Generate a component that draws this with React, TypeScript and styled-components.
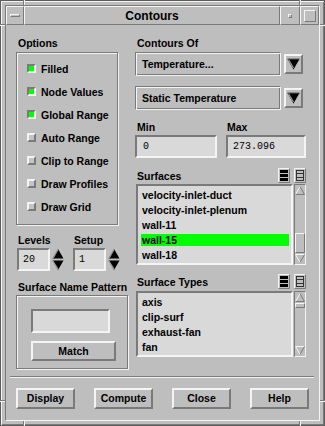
import React from 'react';
import styled, { createGlobalStyle, css } from 'styled-components';

const BG = '#bebebe';
const LIGHT = '#f4f4f4';
const DARK = '#7a7a7a';
const FIELD = '#d9d9d9';
const GREEN = '#00ff00';
const FONT = '"Liberation Sans", Arial, Helvetica, sans-serif';
const MONO = '"Liberation Mono", "Courier New", monospace';

const Global = createGlobalStyle`
  html, body { margin: 0; padding: 0; background: ${BG}; }
  body { font-family: ${FONT}; color: #000; }
  * { box-sizing: border-box; }
`;

const raised = (w: number) => css`
  border: ${w}px solid;
  border-color: ${LIGHT} ${DARK} ${DARK} ${LIGHT};
`;
const sunken = (w: number) => css`
  border: ${w}px solid;
  border-color: ${DARK} ${LIGHT} ${LIGHT} ${DARK};
`;

const Window = styled.div`
  position: relative;
  width: 325px;
  height: 426px;
  background: ${BG};
  border: 1px solid #5c5c5c;
  box-shadow: inset 1px 1px 0 ${LIGHT}, inset -1px -1px 0 ${DARK};
  padding: 4px;
`;

const Inner = styled.div`
  height: 100%;
  display: flex;
  flex-direction: column;
  ${sunken(1)}
`;

const Notch = styled.span<{ $x: number; $y: number; $vertical?: boolean; $len: number }>`
  position: absolute;
  left: ${(p) => p.$x - 1}px;
  top: ${(p) => p.$y - 1}px;
  width: ${(p) => (p.$vertical ? 2 : p.$len)}px;
  height: ${(p) => (p.$vertical ? p.$len : 2)}px;
  ${(p) =>
    p.$vertical
      ? css`border-left: 1px solid ${DARK}; border-right: 1px solid ${LIGHT};`
      : css`border-top: 1px solid ${DARK}; border-bottom: 1px solid ${LIGHT};`}
`;

const TitleBar = styled.div`
  display: flex;
  height: 19px;
`;

const TitleSeg = styled.div<{ $w?: number }>`
  ${raised(1)}
  ${(p) => (p.$w ? css`width: ${p.$w}px;` : css`flex: 1;`)}
  display: flex;
  align-items: center;
  justify-content: center;
  font: bold 12px/1 ${FONT};
`;

const MenuGlyph = styled.span`
  width: 10px;
  height: 3px;
  ${raised(1)}
`;

const MinGlyph = styled.span`
  width: 4px;
  height: 4px;
  ${raised(1)}
`;

const MaxGlyph = styled.span`
  width: 12px;
  height: 12px;
  ${raised(1)}
`;

const Main = styled.div`
  height: 351px;
  display: flex;
  padding: 12px 0 0 10px;
`;

const LeftCol = styled.div`
  width: 119px;
  display: flex;
  flex-direction: column;
`;

const RightCol = styled.div`
  width: 171px;
  display: flex;
  flex-direction: column;
`;

const Label = styled.div<{ $ml?: number; $mt?: number }>`
  font: bold 10.5px/12px ${FONT};
  height: 12px;
  white-space: nowrap;
  margin-left: ${(p) => p.$ml ?? 2}px;
  margin-top: ${(p) => p.$mt ?? 0}px;
`;

const GroupBox = styled.div<{ $w: number; $mt: number }>`
  width: ${(p) => p.$w}px;
  margin-top: ${(p) => p.$mt}px;
  border: 1px solid ${DARK};
  box-shadow: inset 1px 1px 0 ${LIGHT}, 1px 1px 0 ${LIGHT};
  display: flex;
  flex-direction: column;
`;

const OptionsBox = styled(GroupBox)`
  padding: 4px 0 6px 10px;
`;

const OptionRow = styled.div`
  height: 23px;
  display: flex;
  align-items: center;
  gap: 5px;
  font: bold 10.5px/12px ${FONT};
  white-space: nowrap;
`;

const Check = styled.span<{ $on: boolean }>`
  width: 9px;
  height: 9px;
  flex: none;
  ${(p) => (p.$on ? sunken(2) : raised(2))}
  background: ${(p) => (p.$on ? GREEN : '#c4c4c4')};
`;

const SpinRow = styled.div`
  display: flex;
  gap: 9px;
  margin: 9px 0 0 1px;
`;

const SpinGroup = styled.div`
  display: flex;
  flex-direction: column;
`;

const InputRow = styled.div`
  display: flex;
  align-items: center;
  margin-top: 2px;
  gap: 2px;
`;

const TextField = styled.div<{ $w: number; $h: number; $pl?: number }>`
  width: ${(p) => p.$w}px;
  height: ${(p) => p.$h}px;
  ${sunken(2)}
  background: ${FIELD};
  font: 10px/1 ${MONO};
  display: flex;
  align-items: center;
  padding-left: ${(p) => p.$pl ?? 4}px;
`;

const PatternBox = styled(GroupBox)`
  padding: 13px 0 7px 14px;
  gap: 8px;
`;

const Button = styled.button<{ $w: number; $h: number }>`
  width: ${(p) => p.$w}px;
  height: ${(p) => p.$h}px;
  ${raised(2)}
  background: ${BG};
  color: #000;
  font: bold 10.5px/1 ${FONT};
  padding: 0;
  display: flex;
  align-items: center;
  justify-content: center;
`;

const MenuRow = styled.div<{ $mt: number }>`
  display: flex;
  align-items: center;
  gap: 3px;
  margin-top: ${(p) => p.$mt}px;
`;

const OptionField = styled.div`
  width: 146px;
  height: 24px;
  border: 1px solid;
  border-color: ${DARK} ${LIGHT} ${LIGHT} ${DARK};
  box-shadow: inset 1px 1px 0 ${LIGHT}, inset -1px -1px 0 ${DARK};
  background: ${BG};
  font: bold 10.5px/1 ${FONT};
  display: flex;
  align-items: center;
  padding-left: 6px;
`;

const ArrowButton = styled.div`
  width: 19px;
  height: 20px;
  ${raised(2)}
  background: ${BG};
  display: flex;
  align-items: center;
  justify-content: center;
`;

const MinMaxGrid = styled.div`
  display: grid;
  grid-template-columns: 82px 80px;
  column-gap: 9px;
  row-gap: 2px;
  margin-top: 11px;
`;

const ListHeader = styled.div<{ $mt: number }>`
  display: flex;
  align-items: center;
  height: 15px;
  gap: 4px;
  margin-top: ${(p) => p.$mt}px;
`;

const HeaderLabel = styled(Label)`
  flex: 1;
`;

const ListRow = styled.div<{ $mt: number; $h: number }>`
  display: flex;
  gap: 1px;
  margin: ${(p) => p.$mt}px 0 0 1px;
  height: ${(p) => p.$h}px;
`;

const ListBox = styled.div`
  width: 157px;
  height: 100%;
  ${sunken(2)}
  background: ${FIELD};
  padding: 3px 2px 0 3px;
  display: flex;
  flex-direction: column;
  gap: 3px;
  overflow: hidden;
`;

const ListItem = styled.div<{ $selected?: boolean }>`
  height: 12px;
  flex: none;
  font: bold 10.5px/12px ${FONT};
  white-space: nowrap;
  padding-left: 1px;
  background: ${(p) => (p.$selected ? GREEN : 'transparent')};
`;

const ScrollBar = styled.div`
  width: 12px;
  height: 100%;
  ${sunken(1)}
  background: ${BG};
  display: flex;
  flex-direction: column;
  align-items: center;
  padding: 1px 0;
`;

const Thumb = styled.div<{ $top: number; $h: number }>`
  width: 10px;
  height: ${(p) => p.$h}px;
  margin-top: ${(p) => p.$top}px;
  ${raised(1)}
  flex: none;
`;

const ScrollEnd = styled.div`
  margin-top: auto;
  display: flex;
`;

const Separator = styled.div`
  height: 2px;
  margin: 0 5px 0 4px;
  border-top: 1px solid ${DARK};
  border-bottom: 1px solid ${LIGHT};
`;

const Footer = styled.div`
  display: flex;
  gap: 19px;
  padding: 10px 0 11px 10px;
`;

const DownTriangle = () => (
  <svg width="13" height="12" viewBox="0 0 13 12">
    <polygon points="0.5,1 12.5,1 6.5,11.5" fill="#000" />
    <polyline points="1.5,1.5 6.5,10" stroke="#9a9a9a" strokeWidth="1.2" fill="none" />
    <line x1="0.5" y1="1" x2="12.5" y2="1" stroke="#5a5a5a" strokeWidth="1" />
  </svg>
);

const Spinner = () => (
  <svg width="12" height="23" viewBox="0 0 12 23">
    <polygon points="6,1 11.5,10.5 0.5,10.5" fill="#000" />
    <polyline points="6,1.5 1.2,10" stroke="#a0a0a0" strokeWidth="1.2" fill="none" />
    <polygon points="0.5,12.5 11.5,12.5 6,22" fill="#000" />
    <polyline points="0.8,12.8 6,21" stroke="#a0a0a0" strokeWidth="1.2" fill="none" />
  </svg>
);

const ScrollUp = () => (
  <svg width="10" height="9" viewBox="0 0 10 9">
    <polygon points="5,0.5 9.5,8.5 0.5,8.5" fill={BG} />
    <polyline points="0.5,8.5 5,0.5" stroke={LIGHT} strokeWidth="1" fill="none" />
    <polyline points="5,0.5 9.5,8.5 0.5,8.5" stroke={DARK} strokeWidth="1" fill="none" />
  </svg>
);

const ScrollDown = () => (
  <svg width="10" height="9" viewBox="0 0 10 9">
    <polygon points="0.5,0.5 9.5,0.5 5,8.5" fill={BG} />
    <polyline points="9.5,0.5 0.5,0.5 5,8.5" stroke={LIGHT} strokeWidth="1" fill="none" />
    <polyline points="9.5,0.5 5,8.5" stroke={DARK} strokeWidth="1" fill="none" />
  </svg>
);

const SelectAllIcon = () => (
  <svg width="12" height="15" viewBox="0 0 12 15">
    <rect x="0" y="0" width="12" height="15" fill={BG} />
    <polyline points="0.5,14.5 0.5,0.5 11.5,0.5" stroke={LIGHT} fill="none" />
    <polyline points="11.5,0.5 11.5,14.5 0.5,14.5" stroke={DARK} fill="none" />
    <rect x="2" y="2" width="8" height="3" fill="#000" />
    <rect x="2" y="6" width="8" height="3" fill="#000" />
    <rect x="2" y="10" width="8" height="3" fill="#000" />
  </svg>
);

const DeselectIcon = () => (
  <svg width="12" height="15" viewBox="0 0 12 15">
    <rect x="0" y="0" width="12" height="15" fill={BG} />
    <polyline points="0.5,14.5 0.5,0.5 11.5,0.5" stroke={LIGHT} fill="none" />
    <polyline points="11.5,0.5 11.5,14.5 0.5,14.5" stroke={DARK} fill="none" />
    <rect x="2.5" y="2.5" width="7" height="10" stroke="#333" fill="none" />
    <line x1="2.5" y1="5.5" x2="9.5" y2="5.5" stroke="#333" />
    <line x1="2.5" y1="9.5" x2="9.5" y2="9.5" stroke="#333" />
  </svg>
);

const options: [string, boolean][] = [
  ['Filled', true],
  ['Node Values', true],
  ['Global Range', true],
  ['Auto Range', false],
  ['Clip to Range', false],
  ['Draw Profiles', false],
  ['Draw Grid', false],
];

const surfaces = ['velocity-inlet-duct', 'velocity-inlet-plenum', 'wall-11', 'wall-15', 'wall-18'];
const surfaceTypes = ['axis', 'clip-surf', 'exhaust-fan', 'fan'];

export default function App() {
  return (
    <>
      <Global />
      <Window>
        <Notch $x={23} $y={0} $vertical $len={5} />
        <Notch $x={299} $y={0} $vertical $len={5} />
        <Notch $x={23} $y={421} $vertical $len={5} />
        <Notch $x={299} $y={421} $vertical $len={5} />
        <Notch $x={0} $y={24} $len={5} />
        <Notch $x={320} $y={24} $len={5} />
        <Notch $x={0} $y={400} $len={5} />
        <Notch $x={320} $y={400} $len={5} />
        <Inner>
          <TitleBar>
            <TitleSeg $w={18}>
              <MenuGlyph />
            </TitleSeg>
            <TitleSeg>Contours</TitleSeg>
            <TitleSeg $w={20}>
              <MinGlyph />
            </TitleSeg>
            <TitleSeg $w={19}>
              <MaxGlyph />
            </TitleSeg>
          </TitleBar>
          <Main>
            <LeftCol>
              <Label>Options</Label>
              <OptionsBox $w={102} $mt={3}>
                {options.map(([name, on]) => (
                  <OptionRow key={name}>
                    <Check $on={on} />
                    {name}
                  </OptionRow>
                ))}
              </OptionsBox>
              <SpinRow>
                <SpinGroup>
                  <Label $ml={1}>Levels</Label>
                  <InputRow>
                    <TextField $w={33} $h={23} $pl={4}>20</TextField>
                    <Spinner />
                  </InputRow>
                </SpinGroup>
                <SpinGroup>
                  <Label $ml={1}>Setup</Label>
                  <InputRow>
                    <TextField $w={33} $h={23} $pl={4}>1</TextField>
                    <Spinner />
                  </InputRow>
                </SpinGroup>
              </SpinRow>
              <Label $mt={10}>Surface Name Pattern</Label>
              <PatternBox $w={112} $mt={2}>
                <TextField $w={79} $h={24} />
                <Button $w={85} $h={20}>Match</Button>
              </PatternBox>
            </LeftCol>
            <RightCol>
              <Label>Contours Of</Label>
              <MenuRow $mt={3}>
                <OptionField>Temperature...</OptionField>
                <ArrowButton>
                  <DownTriangle />
                </ArrowButton>
              </MenuRow>
              <MenuRow $mt={10}>
                <OptionField>Static Temperature</OptionField>
                <ArrowButton>
                  <DownTriangle />
                </ArrowButton>
              </MenuRow>
              <MinMaxGrid>
                <Label>Min</Label>
                <Label $ml={1}>Max</Label>
                <TextField $w={82} $h={23} $pl={6}>0</TextField>
                <TextField $w={80} $h={23} $pl={5}>273.096</TextField>
              </MinMaxGrid>
              <ListHeader $mt={10}>
                <HeaderLabel>Surfaces</HeaderLabel>
                <SelectAllIcon />
                <DeselectIcon />
              </ListHeader>
              <ListRow $mt={1} $h={81}>
                <ListBox>
                  {surfaces.map((s) => (
                    <ListItem key={s} $selected={s === 'wall-15'}>
                      {s}
                    </ListItem>
                  ))}
                </ListBox>
                <ScrollBar>
                  <ScrollUp />
                  <Thumb $top={38} $h={20} />
                  <ScrollEnd>
                    <ScrollDown />
                  </ScrollEnd>
                </ScrollBar>
              </ListRow>
              <ListHeader $mt={9}>
                <HeaderLabel>Surface Types</HeaderLabel>
                <SelectAllIcon />
                <DeselectIcon />
              </ListHeader>
              <ListRow $mt={2} $h={66}>
                <ListBox>
                  {surfaceTypes.map((s) => (
                    <ListItem key={s}>{s}</ListItem>
                  ))}
                </ListBox>
                <ScrollBar>
                  <ScrollUp />
                  <Thumb $top={1} $h={5} />
                  <ScrollEnd>
                    <ScrollDown />
                  </ScrollEnd>
                </ScrollBar>
              </ListRow>
            </RightCol>
          </Main>
          <Separator />
          <Footer>
            <Button $w={59} $h={21}>Display</Button>
            <Button $w={59} $h={21}>Compute</Button>
            <Button $w={59} $h={21}>Close</Button>
            <Button $w={59} $h={21}>Help</Button>
          </Footer>
        </Inner>
      </Window>
    </>
  );
}
